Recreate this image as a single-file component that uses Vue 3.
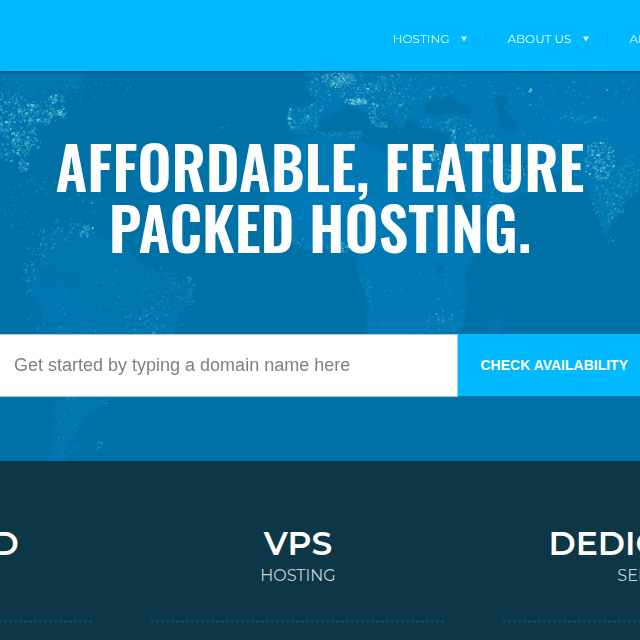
<script setup>
const menu = [
  { label: 'HOSTING', more: true },
  { label: 'ABOUT US', more: true },
  { label: 'ABUSE', more: false },
]

const plans = [
  { name: 'SHARED', kind: 'HOSTING' },
  { name: 'VPS', kind: 'HOSTING' },
  { name: 'DEDICATED', kind: 'SERVER' },
]

// Night lights: [centre x, centre y, radius x, radius y, count, tone]
const clusters = [
  [6, 125, 30, 36, 420, 2], [42, 112, 26, 12, 170, 2], [25, 142, 16, 14, 90, 2], [23, 164, 5, 10, 45, 2],
  [56, 98, 10, 4, 40, 2], [56, 113, 9, 3, 40, 2],
  [30, 90, 60, 18, 90, 0], [95, 88, 45, 12, 50, 0],
  [40, 185, 34, 9, 40, 0], [85, 198, 18, 6, 26, 1], [10, 215, 24, 22, 40, 0], [97, 210, 6, 20, 20, 1],
  [65, 230, 26, 12, 90, 1], [87, 230, 6, 6, 36, 2], [40, 250, 14, 22, 60, 1], [28, 277, 7, 20, 40, 1],
  [165, 300, 28, 36, 190, 0], [190, 290, 5, 18, 40, 1], [115, 310, 70, 48, 120, 0], [145, 325, 20, 20, 70, 1],
  [45, 318, 20, 28, 26, 1], [65, 405, 14, 14, 30, 0], [102, 402, 14, 6, 14, 1], [98, 444, 4, 5, 12, 1], [65, 440, 16, 22, 30, 0],
  [303, 119, 16, 14, 110, 1], [289, 119, 2, 11, 25, 2], [306, 118, 3, 3, 14, 2], [318, 88, 14, 22, 100, 1],
  [338, 79, 18, 8, 190, 2], [370, 85, 38, 20, 230, 1], [368, 88, 20, 6, 40, 2],
  [355, 101, 12, 3, 110, 2], [373, 112, 5, 12, 50, 2], [381, 124, 7, 3, 20, 2], [398, 112, 18, 20, 90, 1],
  [430, 85, 46, 18, 110, 1], [445, 122, 28, 8, 90, 1], [435, 155, 6, 6, 75, 2], [439, 169, 3, 9, 30, 2],
  [453, 140, 2, 14, 40, 2], [475, 137, 18, 10, 70, 1], [485, 150, 20, 16, 90, 1], [510, 172, 16, 10, 90, 2], [480, 195, 24, 15, 60, 1],
  [555, 95, 80, 30, 140, 1], [582, 118, 26, 4, 60, 1], [530, 90, 2, 2, 8, 3], [530, 145, 30, 22, 60, 1],
  [598, 160, 17, 20, 230, 2], [608, 195, 18, 32, 230, 1], [632, 175, 17, 20, 120, 1], [612, 240, 5, 5, 15, 1],
  [340, 134, 34, 5, 60, 1], [390, 180, 100, 36, 50, 0], [335, 241, 44, 9, 70, 1], [345, 246, 8, 6, 30, 2],
  [364, 286, 7, 20, 26, 1], [415, 300, 48, 40, 80, 0], [445, 285, 15, 38, 55, 0], [440, 322, 18, 12, 50, 1],
  [302, 230, 24, 16, 30, 0], [218, 127, 14, 4, 10, 0],
]

function scatter() {
  let seed = 4127
  const random = () => {
    seed = (seed * 16807) % 2147483647
    return seed / 2147483647
  }
  const tones = ['', '', '', '']
  for (const [cx, cy, rx, ry, count, tone] of clusters) {
    for (let i = 0; i < count; i++) {
      const angle = random() * Math.PI * 2
      const reach = Math.pow(random(), 0.62)
      const x = cx + Math.cos(angle) * reach * rx
      const y = cy + Math.sin(angle) * reach * ry
      const size = 0.8 + random() * 1.3
      const bright = random() > 0.93 ? tone + 1 : Math.max(0, tone - (random() > 0.4 ? 1 : 0))
      const level = Math.min(3, bright)
      tones[level] += `M${x.toFixed(1)} ${y.toFixed(1)}h${size.toFixed(1)}v${size.toFixed(1)}h-${size.toFixed(1)}z`
    }
  }
  return tones
}

const lights = scatter()
</script>

<template>
  <div class="page">
    <header class="topbar">
      <nav class="menu">
        <a v-for="item in menu" :key="item.label" href="#" class="menu-item">
          <span>{{ item.label }}</span>
          <svg v-if="item.more" class="caret" viewBox="0 0 6 6"><path d="M0 0.5h6L3 5.5z" /></svg>
        </a>
      </nav>
    </header>

    <section class="hero">
      <svg class="map" viewBox="0 71 640 390" preserveAspectRatio="xMidYMid slice" aria-hidden="true">
        <defs>
          <filter id="soft" x="-5%" y="-5%" width="110%" height="110%"><feGaussianBlur stdDeviation="1" /></filter>
          <filter id="wide" x="-50%" y="-100%" width="200%" height="300%"><feGaussianBlur stdDeviation="14" /></filter>
          <filter id="glow" x="0" y="0" width="100%" height="100%"><feGaussianBlur stdDeviation="0.5" /></filter>
        </defs>
        <g class="land" filter="url(#soft)">
          <path class="dim" d="M0 71H90L80 88L66 96L62 112L46 126L30 142L24 151L28 165L26 173L20 166L17 155L8 157L0 160z" />
          <path class="dim" d="M40 258L45 236L60 224L90 226L102 236L122 244L141 262L160 274L190 284L193 296L180 314L175 332L165 350L145 362L128 378L112 394L98 410L86 418L76 432L70 445L68 461H48L52 440L54 400L56 370L60 335L50 322L40 308L28 290L25 275z" />
          <path d="M290 140L318 136L360 130L362 142L385 151L400 147L430 152L440 168L450 190L465 215L478 228L497 222L490 240L470 262L465 277L468 300L462 330L450 346L438 372L420 388H390L375 345L366 330L368 310L366 295L358 275L355 255L343 245L325 249L300 250L283 235L270 215L265 200L270 178L280 160z" />
          <path d="M300 71H640V192L624 204L613 222L605 238L598 215L586 188L573 176L548 174L530 166L514 158L505 158L512 170L524 174L540 176L530 190L500 205L480 214L465 195L451 164L452 150L448 134L430 130L410 125L400 128L390 118L380 112L386 125L380 130L365 112L352 106L340 108L330 115L320 122L317 130L303 134L294 132L287 126L288 107L310 106L315 98L306 90L304 86L315 83z" />
          <path class="dim" d="M485 330L492 318L504 310L500 330L490 344z" />
        </g>
        <g class="glow">
          <ellipse cx="330" cy="195" rx="55" ry="25" filter="url(#wide)" />
          <ellipse cx="590" cy="130" rx="70" ry="18" filter="url(#wide)" />
          <ellipse cx="50" cy="315" rx="16" ry="20" filter="url(#wide)" />
        </g>
        <g filter="url(#glow)">
          <path v-for="(d, i) in lights" :key="i" :d="d" :class="'tone-' + i" />
        </g>
        <g class="sea" filter="url(#soft)">
          <path d="M424 113L427 103L435 98L442 101L449 95L458 103L471 110L468 115L450 112L436 116z" />
          <path d="M494 99L502 95L508 100L503 107L510 117L517 124L514 131L502 129L500 119z" />
          <path d="M455 187L461 190L475 220L471 224z" />
          <path d="M437 268L443 264L444 271L438 273z" />
          <path d="M405 122L411 119L416 125L416 133L407 132z" />
        </g>
      </svg>

      <h1 class="headline">AFFORDABLE, FEATURE PACKED HOSTING.</h1>

      <form class="search" @submit.prevent>
        <input class="domain" type="text" aria-label="Domain name" placeholder="Get started by typing a domain name here" />
        <button class="check" type="submit">CHECK AVAILABILITY</button>
      </form>
    </section>

    <section class="plans">
      <article v-for="plan in plans" :key="plan.name" class="plan">
        <h2>{{ plan.name }}</h2>
        <p>{{ plan.kind }}</p>
      </article>
    </section>
  </div>
</template>

<style>
body {
  background: #0d3647;
}
</style>

<style scoped>
.page {
  min-height: 100vh;
  overflow: hidden;
  background: #0d3647;
  color: #fff;
  font-family: Montserrat, Inter, "Open Sans", sans-serif;
}

.topbar {
  position: relative;
  z-index: 1;
  display: flex;
  justify-content: flex-end;
  height: 71px;
  background: #00b9ff;
  box-shadow: 0 1px 2px rgba(0, 30, 60, 0.55);
}

.menu {
  display: flex;
  align-items: center;
  margin-right: -51px;
  padding-top: 6px;
}

.menu-item {
  display: flex;
  align-items: center;
  gap: 12px;
  padding: 0 18px 0 21px;
  border-right: 1px solid #04adef;
  color: #e8f9ff;
  font-size: 12px;
  line-height: 14px;
  text-decoration: none;
  white-space: nowrap;
}

.caret {
  width: 6px;
  height: 6px;
  fill: #e3f8ff;
}

.hero {
  position: relative;
  padding: 64px 0;
  background: #0071a6;
}

.map {
  position: absolute;
  inset: 0;
  width: 100%;
  height: 100%;
}

.land {
  fill: #0079b4;
}

.dim {
  fill: #0075ae;
}

.glow {
  fill: #0080c6;
  opacity: 0.35;
}

.sea {
  fill: #0070a5;
}

.tone-0 {
  fill: #1c8ebb;
  opacity: 0.5;
}

.tone-1 {
  fill: #2e9cc0;
  opacity: 0.6;
}

.tone-2 {
  fill: #4bb4ca;
  opacity: 0.7;
}

.tone-3 {
  fill: #7bd6d8;
  opacity: 0.85;
}

.headline {
  position: relative;
  max-width: 600px;
  margin: 0 auto;
  font-family: Oswald, "Liberation Sans Narrow", "DejaVu Sans Condensed", sans-serif;
  font-size: 59px;
  font-weight: 600;
  line-height: 61px;
  text-align: center;
}

.search {
  position: relative;
  display: flex;
  align-items: flex-start;
  margin: 77px -10px 0 0;
}

.domain {
  flex: 1;
  min-width: 0;
  height: 63px;
  box-sizing: border-box;
  padding: 0 14px;
  border: 1px solid #a9c9d8;
  border-left: 0;
  background: #fff;
  color: #777;
  font-family: "Liberation Sans", Arial, sans-serif;
  font-size: 18px;
}

.domain::placeholder {
  color: #808080;
  opacity: 1;
}

.check {
  height: 62px;
  padding: 0 22px;
  border: 0;
  background: #00b9ff;
  color: #fff;
  font-family: "Liberation Sans", Arial, sans-serif;
  font-size: 14px;
  font-weight: 700;
}

.plans {
  display: grid;
  grid-template-columns: repeat(3, 294px);
  justify-content: center;
  gap: 58px;
  margin-right: 44px;
  padding-top: 62px;
}

.plan {
  text-align: center;
}

.plan::after {
  content: "";
  display: block;
  height: 3px;
  margin-top: 31px;
  background: repeating-linear-gradient(90deg, #0a4b64 0 3px, transparent 3px 5px);
}

.plan h2 {
  margin: 0;
  font-size: 33px;
  font-weight: 600;
  line-height: 40px;
}

.plan p {
  margin: 0;
  color: #c5d0d5;
  font-size: 16px;
  font-weight: 400;
  line-height: 26px;
}
</style>
